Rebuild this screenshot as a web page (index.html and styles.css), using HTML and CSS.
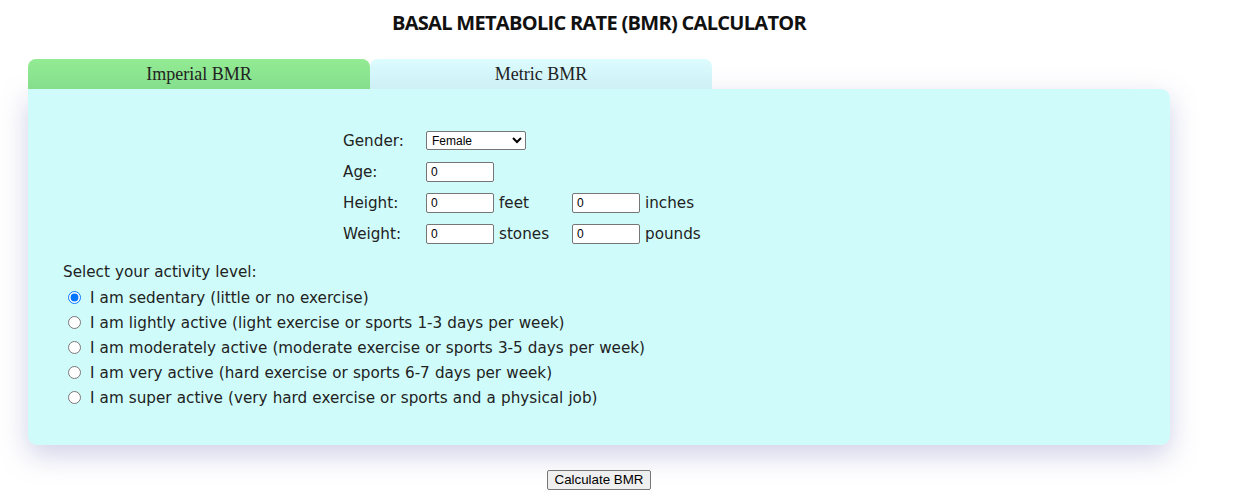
FILE: index.html
```html
<!DOCTYPE html>
<html>
<head>
<meta charset="utf-8">
<link rel="stylesheet" href="styles.css">
</head>
<body>
<div class="page">
<h1 class="title">BASAL METABOLIC RATE (BMR) CALCULATOR</h1>
<div class="calc">
  <div class="tabs">
    <div class="tab tab-active">Imperial BMR</div>
    <div class="tab tab-other">Metric BMR</div>
  </div>
  <div class="panel">
    <div class="fields">
      <div class="lbl">Gender:</div>
      <div class="wide"><select class="sel"><option>Female</option><option>Male</option></select></div>
      <div class="lbl">Age:</div>
      <div class="wide"><input class="num" type="text" value="0"></div>
      <div class="lbl">Height:</div>
      <div><input class="num" type="text" value="0"></div>
      <div class="unit">feet</div>
      <div><input class="num" type="text" value="0"></div>
      <div class="unit">inches</div>
      <div class="lbl">Weight:</div>
      <div><input class="num" type="text" value="0"></div>
      <div class="unit">stones</div>
      <div><input class="num" type="text" value="0"></div>
      <div class="unit">pounds</div>
    </div>
    <div class="activity">
      <div class="act-title">Select your activity level:</div>
      <label class="opt"><input type="radio" name="a" checked><span>I am sedentary (little or no exercise)</span></label>
      <label class="opt"><input type="radio" name="a"><span>I am lightly active (light exercise or sports 1-3 days per week)</span></label>
      <label class="opt"><input type="radio" name="a"><span>I am moderately active (moderate exercise or sports 3-5 days per week)</span></label>
      <label class="opt"><input type="radio" name="a"><span>I am very active (hard exercise or sports 6-7 days per week)</span></label>
      <label class="opt"><input type="radio" name="a"><span>I am super active (very hard exercise or sports and a physical job)</span></label>
    </div>
  </div>
</div>
<div class="actions"><button class="btn">Calculate BMR</button></div>
</div>
</body>
</html>
```
FILE: styles.css
```css
html, body { margin: 0; padding: 0; background: #fff; }
body { padding: 8px; font-family: "DejaVu Sans", "Open Sans", sans-serif; color: #222; }
.page { width: 1182px; }
.title {
  margin: 3px 0 0;
  text-align: center;
  font-family: "Open Sans", sans-serif;
  font-weight: 700;
  font-size: 20px;
  letter-spacing: -0.7px;
  line-height: 24px;
  color: #111;
}
.calc { margin: 24px 0 0 20px; width: 1142px; }
.tabs { display: flex; }
.tab {
  width: 342px;
  height: 30px;
  line-height: 30px;
  text-align: center;
  font-family: "Liberation Serif", serif;
  font-size: 18px;
  color: #222;
  border-radius: 8px 8px 0 0;
}
.tab-active { background: linear-gradient(#93ec93, #84de8c); }
.tab-other { background: linear-gradient(#dcfcfe, #cdf0f6); }
.panel {
  background: #cffcfa;
  border-radius: 0 9px 9px 9px;
  box-shadow: 0 10px 28px rgba(120, 120, 190, 0.35);
  padding: 36px 0 35px 35px;
  font-size: 15.2px;
  word-spacing: 0.3px;
}
.fields {
  margin-left: 280px;
  display: grid;
  grid-template-columns: 83px 73px 73px 73px auto;
  grid-auto-rows: 31px;
  align-items: center;
}
.lbl, .unit { line-height: 20px; }
.wide { grid-column: 2 / 6; }
.sel {
  width: 100px;
  height: 19px;
  font-family: "Liberation Sans", sans-serif;
  font-size: 12px;
  padding: 0 0 0 1px;
  border: 1px solid #767676;
  border-radius: 2px;
  background: #fff;
  color: #000;
  display: block;
}
.num {
  width: 68px;
  height: 20px;
  box-sizing: border-box;
  font-family: "Liberation Sans", sans-serif;
  font-size: 12px;
  padding: 1px 4px;
  border: 1px solid #767676;
  border-radius: 2px;
  background: #fff;
  color: #000;
  display: block;
}
.activity { margin-top: 11px; }
.act-title { line-height: 25px; }
.opt { display: flex; align-items: center; height: 25px; }
.opt input { margin: 0 9px 0 5px; width: 13px; height: 13px; }
.actions { text-align: center; margin-top: 24px; }
.btn {
  font-family: "Liberation Sans", sans-serif;
  font-size: 13.33px;
  padding: 1px 7px;
  height: 20px;
  border: 1px solid #767676;
  border-radius: 2px;
  background: #efefef;
  color: #000;
}
```
